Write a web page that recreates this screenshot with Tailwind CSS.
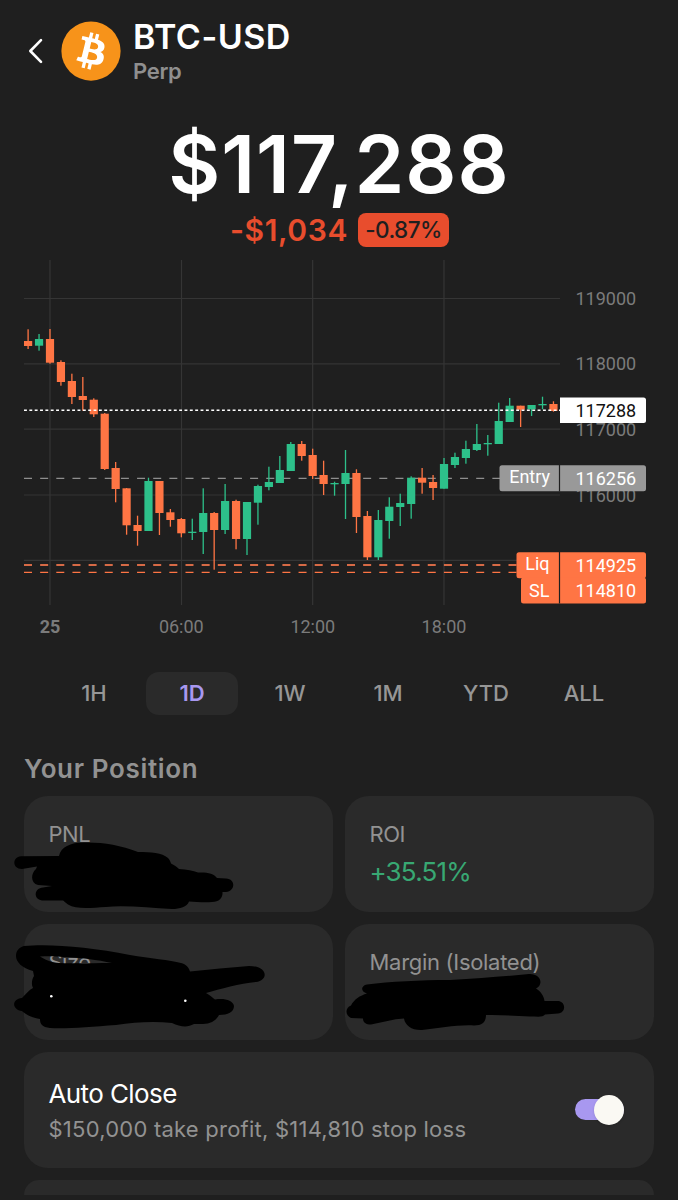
<!DOCTYPE html>
<html lang="en">
<head>
  <meta charset="UTF-8" />
  <title>BTC-USD Perp</title>
  <script src="https://cdn.jsdelivr.net/npm/@tailwindcss/browser@4"></script>
</head>
<body class="bg-[#1f1f1f] font-['Inter',sans-serif] text-white">
  <div class="relative w-[678px] h-[1200px] overflow-hidden flex flex-col">

    <!-- Header -->
    <header class="flex items-center h-[102px] pl-[27px] shrink-0">
      <svg class="w-4 h-7" viewBox="0 0 16 28" fill="none" stroke="#fff" stroke-width="2.6" stroke-linecap="round" stroke-linejoin="round">
        <path d="M14 3.2 3.3 14 14 24.8" />
      </svg>
      <svg class="w-[60px] h-[60px] ml-[18px]" viewBox="0 0 32 32">
        <circle cx="16" cy="16" r="15.8" fill="#f7931a" />
        <path fill="#fff" d="M23.19 14.02c.31-2.1-1.28-3.23-3.47-3.98l.71-2.84-1.73-.43-.69 2.77c-.45-.12-.92-.22-1.38-.33l.69-2.78-1.72-.43-.71 2.84c-.38-.09-.75-.17-1.1-.26v-.01l-2.38-.6-.46 1.85s1.28.29 1.25.31c.7.18.83.64.81 1l-.81 3.24c.05.01.11.03.18.06l-.18-.05-1.13 4.53c-.09.21-.31.53-.79.41.02.03-1.26-.31-1.26-.31l-.86 1.98 2.25.56c.42.11.83.22 1.23.32l-.71 2.87 1.72.43.71-2.84c.47.13.93.25 1.37.36l-.7 2.83 1.72.43.72-2.87c2.95.56 5.17.33 6.1-2.33.75-2.15-.04-3.39-1.59-4.2 1.13-.26 1.98-1 2.21-2.53zm-3.95 5.54c-.53 2.15-4.15.99-5.32.69l.95-3.8c1.17.29 4.93.87 4.37 3.11zm.54-5.57c-.49 1.95-3.5.96-4.47.72l.86-3.45c.97.24 4.11.7 3.61 2.73z" />
      </svg>
      <div class="ml-3 pt-0.5">
        <h1 class="text-[34px] leading-[38px] font-semibold tracking-[0.5px]">BTC-USD</h1>
        <p class="text-[22px] leading-[30px] font-semibold tracking-[-0.3px] text-[#8f8f8f]">Perp</p>
      </div>
    </header>

    <!-- Price -->
    <section class="flex flex-col items-center h-[153px] shrink-0 pt-[16px]">
      <div class="text-[80px] leading-[92px] font-semibold tracking-[1px]">$117,288</div>
      <div class="flex items-center gap-[10px] mt-[3px] ml-px">
        <span class="text-[30px] leading-[34px] font-semibold tracking-[0.6px] text-[#e84d2d]">-$1,034</span>
        <span class="w-[91px] h-[34px] rounded-[8px] bg-[#e84d2d] text-[#1f1f1f] text-[22.5px] leading-[34px] font-medium tracking-[-0.6px] text-center">-0.87%</span>
      </div>
    </section>

    <!-- Chart -->
    <svg class="block w-[678px] h-[390px] shrink-0 font-['Roboto',sans-serif] text-[18px]" viewBox="0 255 678 390">
      <g stroke="#353535" stroke-width="1.2">
        <path d="M50 260V605M181.5 260V605M312.7 260V605M444 260V605" />
        <path d="M24 298.5H560M24 363.8H560M24 429.2H560M24 495H560M24 560.3H560" />
      </g>
      <g stroke-width="1.3" fill="none">
        <path d="M24 478.3H500" stroke="#8e8e8e" stroke-dasharray="8 8.15" />
        <path d="M24 565H520" stroke="#d66a46" stroke-width="1.8" stroke-dasharray="8 8.15" />
        <path d="M24 572.4H522" stroke="#ff7544" stroke-dasharray="8 8.15" />
      </g>
      <g id="candles"></g>
      <path d="M24 410.3H560" stroke="#fff" stroke-width="1.4" stroke-dasharray="2.9 2.45" />
      <g fill="#7b7b7b">
        <text x="575.5" y="305">119000</text>
        <text x="575.5" y="370">118000</text>
        <text x="575.5" y="436">117000</text>
        <text x="575.5" y="501.5">116000</text>
        <g text-anchor="middle">
          <text x="50" y="633.4" font-weight="700">25</text>
          <text x="181.3" y="633.4">06:00</text>
          <text x="312.8" y="633.4">12:00</text>
          <text x="444" y="633.4">18:00</text>
        </g>
      </g>
      <!-- price labels -->
      <path d="M560 397.5H643.5a2.5 2.5 0 0 1 2.5 2.5V420.5a2.5 2.5 0 0 1-2.5 2.5H560z" fill="#fff" />
      <text x="575.5" y="417" fill="#111">117288</text>
      <rect x="499.5" y="465.3" width="146.5" height="26" rx="2.5" fill="#999" />
      <rect x="516.5" y="552.3" width="129.5" height="26" rx="2.5" fill="#ff7544" />
      <rect x="521" y="577.5" width="125" height="26" rx="2.5" fill="#ff7544" />
      <path d="M559.5 465V491.5M559.5 552V603.5" stroke="#1f1f1f" stroke-width="1.2" />
      <g fill="#fff">
        <text x="575.5" y="485">116256</text>
        <text x="575.5" y="571.8">114925</text>
        <text x="575.5" y="597.3">114810</text>
        <g text-anchor="end">
          <text x="550" y="483">Entry</text>
          <text x="549.5" y="569.8">Liq</text>
          <text x="549.5" y="597.3">SL</text>
        </g>
      </g>
    </svg>

    <!-- Range tabs -->
    <nav class="grid grid-cols-[92px_92px_92px_92px_92px_92px] gap-[6px] h-[42px] mt-[27px] ml-[48px] shrink-0 text-[22px] leading-[43px] font-medium text-center text-[#969696]">
      <span>1H</span>
      <span class="rounded-[13px] bg-[#2a2a2a] font-semibold text-[#a898f0]">1D</span>
      <span>1W</span>
      <span>1M</span>
      <span>YTD</span>
      <span>ALL</span>
    </nav>

    <h2 class="mt-[39px] ml-[24px] text-[26px] leading-[32px] font-semibold tracking-[0.65px] text-[#929292] shrink-0">Your Position</h2>

    <!-- Position cards -->
    <section class="mt-[11px] ml-6 w-[629.5px] grid grid-cols-2 gap-[12.5px] text-[22px] tracking-[-0.5px] text-[#929292] shrink-0">
      <div class="h-[115.5px] rounded-[24px] bg-[#2a2a2a] px-[24.5px] pt-[24px] leading-[28px]">PNL</div>
      <div class="h-[115.5px] rounded-[24px] bg-[#2a2a2a] px-[24.5px] pt-[24px] leading-[28px]">
        ROI
        <div class="mt-[6px] text-[26px] leading-[36px] tracking-[-0.8px] text-[#38a873]">+35.51%</div>
      </div>
      <div class="h-[115.5px] rounded-[24px] bg-[#2a2a2a] px-[24.5px] pt-[24px] leading-[28px]">Size</div>
      <div class="h-[115.5px] rounded-[24px] bg-[#2a2a2a] px-[24.5px] pt-[24px] leading-[28px] tracking-[-0.3px]">Margin (Isolated)</div>
      <div class="col-span-2 h-[115.5px] rounded-[24px] bg-[#2a2a2a] pl-[24.5px] pr-[29.5px] flex items-center justify-between">
        <div>
          <div class="text-[26px] leading-[36px] tracking-[-0.6px] text-white pt-0.5">Auto Close</div>
          <div class="leading-[34px] tracking-[0.23px]">$150,000 take profit, $114,810 stop loss</div>
        </div>
        <div class="flex items-center w-[49px] h-[21px] rounded-full bg-[#a898f0]">
          <span class="w-[30px] h-[30px] shrink-0 ml-auto rounded-full bg-[#faf9f3] shadow"></span>
        </div>
      </div>
      <div class="col-span-2 h-[15px] rounded-t-[24px] bg-[#2a2a2a]"></div>
    </section>

    <!-- Marker scribbles over the private values -->
    <svg class="absolute left-0 top-[785px] w-[678px] h-[270px]" viewBox="0 0 678 270" fill="#000">
      <path d="M21 71.3L59 71C61 62 70 57.5 84 57.5C102 57 120 60 138 67C151 67 162 67.5 168 73C170 75 170.5 77 171 78.5C174 80 177 82 179 84C187 84.5 193 85.5 198 87.5C207 87 214 88.5 217 93L226 93.5C236 94 235.5 106 226 107L222.5 107C223 113 219 117 212 117C205 117.5 196 117 189 116.5C187 122 180 124 172 124C150 123 125 120 106 122C90 123 76 124.5 68 119.5C65 117.5 64 116 63 115.5L42 115.5C33 114 34 103 43 102.5L52 101L38 100C30 98 31 88 36 84L37 81.5L22 84C12 84 12 72 21 71.3Z" />
      <path fill-rule="evenodd" d="M24 161C50 158.5 90 162 130 170C150 173.5 170 175 181 178C186 179 189 183 190 186.5C210 184.5 230 182.5 249 181C268 181 269 195 256 197C240 198.5 220 204 206 208C210 210 213 213 215 214.5C224 213 233 215 234 221C234 227 228 230 219 230C216 236 210 239 203 239L194 239C187 243 180 241.5 172 238C155 236 135 237 116 240C90 242 65 244 50 243C42 242 40 239 40 234C32 233 25 229 22 226C12 225 11 214 22 213C26 209 29 205 33 203C31 199 32 194 34 191L33 186C22 183 16 177 16 171C16 165 20 162 24 161ZM40 171.5C43 173.5 48 176 54 177.5C70 179 90 178 112 178C98 175 80 172.5 64 172C55 171 48 171 40 171.5Z" />
      <circle cx="51.3" cy="211.3" r="1.3" fill="#fff" />
      <circle cx="185.3" cy="215.7" r="1.3" fill="#fff" />
      <path d="M367 199.5C390 196.5 420 195 450 195C480 193 505 191.5 529 189C541 188.5 544 199.5 536 203.5C541 206.5 544 211.5 544.5 216L559 216C566 217.5 566 227.5 558 228.5L545 229.5C543 232.5 538 231.5 530 231.5C515 231 500 229.5 486 230C486 237.5 482 240.5 474 240.5C457 239.5 440 243.5 422 245C412 245.5 405 240.5 404 233.5C393 234 382 237.5 371 239.5C366 239.5 363 237.5 363 233.5L351 233C345 230.5 345 222.5 351 220.5C354 214.5 360 210.5 367 208.5C360 206.5 361 200.5 367 199.5Z" />
    </svg>
  </div>

  <script>
    // [high, body top, body bottom, low, up]
    const candles = [
      [329.3, 341, 346, 349, 0], [334, 339, 345.7, 350.7, 1], [329, 339, 362.7, 363.7, 0],
      [360.3, 362, 382, 385.7, 0], [373.7, 381, 397, 404, 0], [377, 396, 400, 410.7, 0],
      [398.3, 399.7, 414.3, 417, 0], [413, 413.7, 469, 470, 0], [462, 468, 489, 502.3, 0],
      [488, 488.3, 525.3, 534.7, 0], [515.7, 525, 531, 545.7, 0], [477.7, 481, 531, 531, 1],
      [481, 481, 513, 535, 0], [509, 512.3, 520, 526.7, 0], [518, 519, 533.3, 537.3, 0],
      [518.7, 531.7, 533, 540, 1], [488.3, 513, 532, 554, 1], [512, 513, 530, 569.7, 0],
      [484, 501, 530, 534, 1], [499.7, 501, 539, 549.3, 0], [502, 502, 539, 555, 1],
      [484.7, 486, 502.7, 524.7, 1], [466.7, 482, 487, 490.3, 1], [456, 470, 483, 483, 1],
      [442, 444, 471, 471, 1], [441, 444, 456, 460.7, 0], [448.7, 455, 476, 479, 0],
      [460.7, 475, 484, 495, 0], [481.7, 483, 484.3, 495.7, 1], [450, 473, 484, 519, 1],
      [469.3, 473, 517, 533, 0], [511, 516, 557.3, 560, 0], [510, 520, 557.3, 560, 1],
      [497.3, 506.7, 521, 538.7, 1], [493.7, 503, 507, 526, 1], [476.3, 477.7, 504, 518.7, 1],
      [468, 477.7, 482.7, 493.7, 0], [475, 482, 488, 500, 0], [458, 464, 488.7, 488.7, 1],
      [452.7, 457, 465, 468, 1], [440.7, 449, 458, 463.7, 1], [424, 444, 450, 451, 1],
      [435, 443, 444.3, 455.7, 1], [402.7, 421, 444, 444, 1], [398, 405.7, 422, 422, 1],
      [405.7, 405.7, 409.7, 427, 0], [405, 405, 409.3, 416, 1], [396.7, 404, 405.3, 409.3, 1],
      [401.3, 404, 411, 411.7, 0]
    ];
    let out = '';
    candles.forEach(([high, top, bottom, low, up], i) => {
      const x = 28.1 + i * 10.945;
      const fill = up ? '#2dc08a' : '#ff7544';
      out += `<rect x="${x - 0.65}" y="${high}" width="1.3" height="${low - high}" fill="${fill}" />`;
      out += `<rect x="${x - 4.1}" y="${top}" width="8.2" height="${bottom - top}" fill="${fill}" />`;
    });
    document.getElementById('candles').innerHTML = out;
  </script>
</body>
</html>
